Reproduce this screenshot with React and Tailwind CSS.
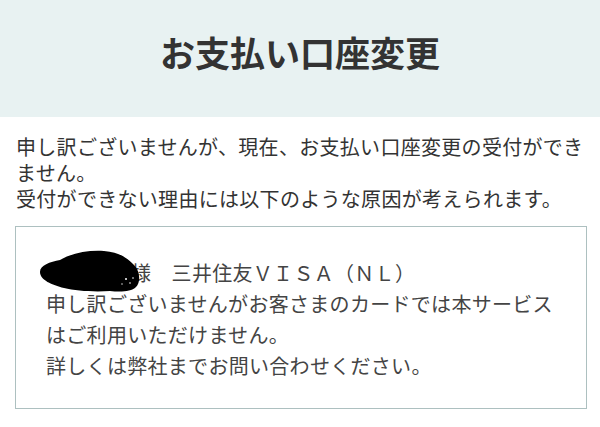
export default function App() {
  const font = { fontFamily: '"Noto Sans CJK JP", "Noto Sans", sans-serif' };
  return (
    <div className="w-[600px] h-[427px] bg-white overflow-hidden" style={font}>
      <div className="h-[117px] bg-[#e8f2f2] flex items-center justify-center pb-[14px]">
        <h1 className="text-[35px] font-bold text-[#333333] tracking-[0px] leading-none">お支払い口座変更</h1>
      </div>
      <div className="pl-[16px] pr-[12px] pt-[17px] text-[20px] leading-[26px] tracking-[0.3px] text-[#333333]">
        <p>申し訳ございませんが、現在、お支払い口座変更の受付ができません。</p>
        <p>受付ができない理由には以下のような原因が考えられます。</p>
      </div>
      <div className="ml-[15px] mr-[13px] mt-[14px] border border-[#adc0c0] pl-[30px] pr-[20px] pt-[30px] pb-[27px] text-[20px] leading-[31px] tracking-[0.3px] text-[#444444]">
        <p>
          <span className="relative inline-block w-[85px] h-[20px] align-middle">
            <svg className="absolute left-[-8px] top-[-16px]" width="104" height="44" viewBox="0 0 104 44">
              <path d="M2,22 C2,15 12,12 22,10 C34,3 50,0 66,1 C82,2 90,9 96,15 C102,21 103,32 98,37 C93,42 82,42 72,41 C56,42 38,41 26,38 C14,35 2,30 2,22 Z" fill="#000" />
              <circle cx="88" cy="29" r="1" fill="#fff" />
              <circle cx="92" cy="33" r="0.8" fill="#fff" />
              <circle cx="95" cy="28" r="0.8" fill="#fff" />
              <circle cx="84" cy="34" r="0.7" fill="#fff" />
            </svg>
          </span>
          様　三井住友ＶＩＳＡ（ＮＬ）
        </p>
        <p>申し訳ございませんがお客さまのカードでは本サービスはご利用いただけません。</p>
        <p>詳しくは弊社までお問い合わせください。</p>
      </div>
    </div>
  );
}
